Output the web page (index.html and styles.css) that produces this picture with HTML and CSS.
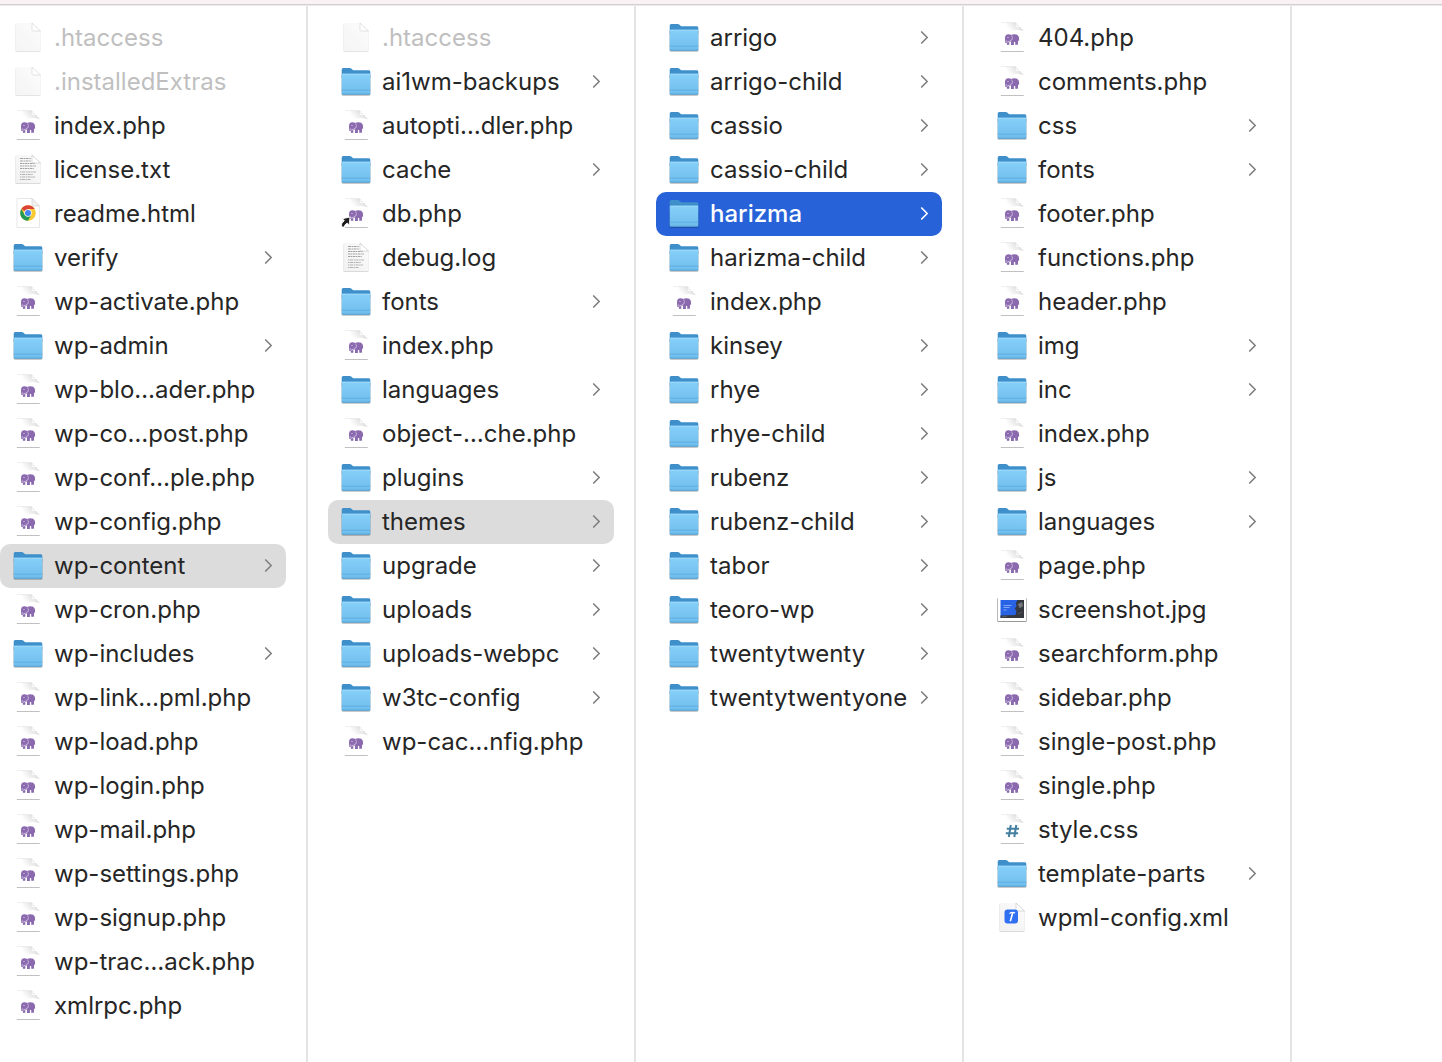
FILE: index.html
```html
<!DOCTYPE html>
<html lang="en">
<head>
    <meta charset="UTF-8">
    <meta name="viewport" content="width=device-width, initial-scale=1.0">
    <title>themes</title>
    <link rel="stylesheet" href="styles.css">
</head>
<body>
    <svg class="sprite" aria-hidden="true">
        <defs>
            <linearGradient id="folderFront" x1="0" y1="0" x2="0" y2="1">
                <stop offset="0" stop-color="#86cffa"/>
                <stop offset="1" stop-color="#6fbdec"/>
            </linearGradient>
            <linearGradient id="paper" x1="0" y1="1" x2="1" y2="0">
                <stop offset="0" stop-color="#f1f1f1"/>
                <stop offset="1" stop-color="#fbfbfb"/>
            </linearGradient>
            <linearGradient id="foldShade" gradientUnits="userSpaceOnUse" x1="15" y1="10" x2="23" y2="3">
                <stop offset="0" stop-color="#ffffff"/>
                <stop offset="1" stop-color="#dedede"/>
            </linearGradient>
        </defs>
        <symbol id="folder" viewBox="0 0 32 32">
            <path d="M1.500 9h29v19a1.500 1.500 0 0 1-1.500 1.700h-26a1.500 1.500 0 0 1-1.500-1.700z" fill="#000" opacity=".28"/>
            <path d="M1.700 12V3.500q0-1.500 1.500-1.500h6.500q1 0 1.700.8l1.200 1q.6.500 1.500.5H29q1.300 0 1.300 1.500V12z" fill="#3f8fcb"/>
            <path d="M1.700 8.800q0-1.100 1.100-1.100h26.400q1.100 0 1.100 1.100v18.600q0 1.300-1.300 1.300H3q-1.300 0-1.300-1.300z" fill="url(#folderFront)"/>
            <path d="M2.300 8.200H30" stroke="#a4defd" stroke-width=".8"/>
            <path d="M1.700 24.200h28.600" stroke="#5aa9db" stroke-width=".8"/>
            <path d="M2 28.200h28" stroke="#4e9bcb" stroke-width=".8"/>
        </symbol>
        <symbol id="page" viewBox="0 0 32 32">
            <path d="M5 1.500h15.500l8 7.500v19.500q0 1.500-1.500 1.500H5q-1.500 0-1.500-1.500V3q0-1.500 1.500-1.500z" fill="#000" opacity=".18"/>
            <path d="M5 1h15l8.500 8v19q0 1.300-1.300 1.300H5q-1.300 0-1.300-1.300V2.300Q3.700 1 5 1z" fill="url(#paper)"/>
            <path d="M20 1v6.800q0 1.200 1.200 1.200H28.500z" fill="#fff" stroke="#c8c8c8" stroke-width=".7"/>
        </symbol>
        <symbol id="sheet" viewBox="0 0 32 32">
            <path d="M5 0h14.500l7.500 9v20H5z" fill="#fff"/>
            <path d="M5 .3H18.500Q20.500 1 20.500 5q4.500-.2 6 4.200Q22 6.500 17.500 8.500L12 10 10 1z" fill="url(#foldShade)"/>
            <path d="M19 .5L27.500 9" stroke="#c2c2c2" stroke-width=".7" stroke-dasharray="2 1.200"/>
            <path d="M5 .4h13" stroke="#e6e6e6" stroke-width=".7"/>
            <path d="M4.800 29.500h23" stroke="#b9b9b9" stroke-width=".9"/>
        </symbol>
        <symbol id="php" viewBox="0 0 32 32">
            <use href="#sheet"/>
            <path d="M9 16.500Q8.800 12.300 12.500 12.200q1.700 0 2.700.7 1-.6 3.300-.6 3.300 0 4.200 2.200.5 1.300.4 4.300l-.7.200-.3-1.500-.2 5.200h-2.700v-2.600h-1.300v2.800h-2.900v-3.500q-1 .3-1.700-.1v3.500h-2.400v-2.200q-.6 1.200-1.600 0Q9.100 19 9 16.500z" fill="#8a69af"/>
            <path d="M15.600 13.500q1.600 2.300.3 4.400-1 1-2.300.3" fill="none" stroke="#e8ddf2" stroke-width=".6"/>
            <circle cx="12" cy="15.500" r=".5" fill="#fff"/>
            <path d="M10.500 18.500l.8 2M12.500 19l-.4 1.500" stroke="#fff" stroke-width=".6"/>
        </symbol>
        <symbol id="alias" viewBox="0 0 32 32">
            <use href="#php"/>
            <path d="M1.300 28.500Q1 25 4.300 22.600L2.400 20.700 10 19l-.8 8-2-1.900Q4.500 26.500 4 29.300z" fill="#1c1c1c" stroke="#fff" stroke-width=".9"/>
        </symbol>
        <symbol id="text" viewBox="0 0 32 32">
            <use href="#page"/>
            <g fill="none" stroke="#a3a3a3" stroke-width="1.100">
                <path d="M8 4.500h11M8 7h11" stroke-dasharray="3 .6 1.500 .5"/>
                <path d="M8 9.500h15M8 12h16M8 14.500h14" stroke-dasharray="2.500 .5 1.200 .6"/>
                <path d="M8 18h16M8 20.500h13M8 23h15M8 25.500h11" stroke-dasharray="1.500 .5 3 .6" stroke="#b2b2b2"/>
            </g>
        </symbol>
        <symbol id="chrome" viewBox="0 0 32 32">
            <path d="M5 .5h15l7.500 8v21H5z" fill="#fff" stroke="#dedede" stroke-width=".7"/>
            <path d="M20 .5V8h7.500z" fill="#f2f2f2" stroke="#cbcbcb" stroke-width=".6"/>
            <circle cx="16" cy="15" r="7.800" fill="#fbc934"/>
            <path d="M16 15L9.250 11.100A7.800 7.800 0 0 1 22.750 11.100H16z" fill="#dc4437"/>
            <path d="M9.250 11.100A7.800 7.800 0 0 0 16 22.800L19.200 16.900 12.700 16.900z" fill="#239957"/>
            <circle cx="16" cy="15" r="3.700" fill="#fff"/>
            <circle cx="16" cy="15" r="3" fill="#4285f4"/>
        </symbol>
        <symbol id="css" viewBox="0 0 32 32">
            <use href="#sheet"/>
            <path d="M14.800 11l-2 12M20.300 11l-2 12M10.800 14.700H23M9.800 19.200h12.300" fill="none" stroke="#437f9f" stroke-width="2"/>
        </symbol>
        <symbol id="xml" viewBox="0 0 32 32">
            <use href="#page"/>
            <rect x="8.500" y="7.500" width="13.500" height="14" rx="3" fill="#2f6ff2"/>
            <path d="M16.800 10.500l-2.500 8.700" stroke="#fff" stroke-width="1.600"/>
            <path d="M13.500 11.700q1.300-1.500 4.500-1.200l1 .8" fill="none" stroke="#fff" stroke-width="1.200"/>
        </symbol>
        <symbol id="image" viewBox="0 0 32 32">
            <rect x="1.300" y="4" width="29.400" height="24" rx="1" fill="#000" opacity=".4"/>
            <rect x="2" y="4" width="28" height="23" fill="#fff"/>
            <rect x="4.500" y="6" width="23.500" height="18" fill="#2863e6"/>
            <path d="M21.500 6H28v18H4.500v-2.500l15-.5 1-4-1.800-2.500 2-2.500-1-2.500z" fill="#35383e"/>
            <path d="M22 10l4-1.500.8 3.500-3 2zM6 23l5-.8M22 20l4-2" fill="#77797d" stroke="#6c7075" stroke-width=".6"/>
            <path d="M7.500 11.500h8M7.500 13.500h6M7.500 16h3" stroke="#a8c3ff" stroke-width=".7"/>
        </symbol>
        <symbol id="chevron" viewBox="0 0 10 16">
            <path d="M1.700 2L7.200 7.500 1.700 13" fill="none" stroke="currentColor" stroke-width="1.700" stroke-linecap="round" stroke-linejoin="round"/>
        </symbol>
    </svg>

    <header class="toolbar"></header>
    <main class="browser">
        <ul class="column first">
            <li><a class="item hidden-file" href="#"><svg class="icon"><use href="#page"/></svg><span class="name">.htaccess</span></a></li>
            <li><a class="item hidden-file" href="#"><svg class="icon"><use href="#page"/></svg><span class="name">.installedExtras</span></a></li>
            <li><a class="item" href="#"><svg class="icon"><use href="#php"/></svg><span class="name">index.php</span></a></li>
            <li><a class="item" href="#"><svg class="icon"><use href="#text"/></svg><span class="name">license.txt</span></a></li>
            <li><a class="item" href="#"><svg class="icon"><use href="#chrome"/></svg><span class="name">readme.html</span></a></li>
            <li><a class="item" href="#"><svg class="icon"><use href="#folder"/></svg><span class="name">verify</span><svg class="arrow"><use href="#chevron"/></svg></a></li>
            <li><a class="item" href="#"><svg class="icon"><use href="#php"/></svg><span class="name">wp-activate.php</span></a></li>
            <li><a class="item" href="#"><svg class="icon"><use href="#folder"/></svg><span class="name">wp-admin</span><svg class="arrow"><use href="#chevron"/></svg></a></li>
            <li><a class="item" href="#"><svg class="icon"><use href="#php"/></svg><span class="name">wp-blo…ader.php</span></a></li>
            <li><a class="item" href="#"><svg class="icon"><use href="#php"/></svg><span class="name">wp-co…post.php</span></a></li>
            <li><a class="item" href="#"><svg class="icon"><use href="#php"/></svg><span class="name">wp-conf…ple.php</span></a></li>
            <li><a class="item" href="#"><svg class="icon"><use href="#php"/></svg><span class="name">wp-config.php</span></a></li>
            <li><a class="item open" href="#"><svg class="icon"><use href="#folder"/></svg><span class="name">wp-content</span><svg class="arrow"><use href="#chevron"/></svg></a></li>
            <li><a class="item" href="#"><svg class="icon"><use href="#php"/></svg><span class="name">wp-cron.php</span></a></li>
            <li><a class="item" href="#"><svg class="icon"><use href="#folder"/></svg><span class="name">wp-includes</span><svg class="arrow"><use href="#chevron"/></svg></a></li>
            <li><a class="item" href="#"><svg class="icon"><use href="#php"/></svg><span class="name">wp-link…pml.php</span></a></li>
            <li><a class="item" href="#"><svg class="icon"><use href="#php"/></svg><span class="name">wp-load.php</span></a></li>
            <li><a class="item" href="#"><svg class="icon"><use href="#php"/></svg><span class="name">wp-login.php</span></a></li>
            <li><a class="item" href="#"><svg class="icon"><use href="#php"/></svg><span class="name">wp-mail.php</span></a></li>
            <li><a class="item" href="#"><svg class="icon"><use href="#php"/></svg><span class="name">wp-settings.php</span></a></li>
            <li><a class="item" href="#"><svg class="icon"><use href="#php"/></svg><span class="name">wp-signup.php</span></a></li>
            <li><a class="item" href="#"><svg class="icon"><use href="#php"/></svg><span class="name">wp-trac…ack.php</span></a></li>
            <li><a class="item" href="#"><svg class="icon"><use href="#php"/></svg><span class="name">xmlrpc.php</span></a></li>
        </ul>
        <ul class="column">
            <li><a class="item hidden-file" href="#"><svg class="icon"><use href="#page"/></svg><span class="name">.htaccess</span></a></li>
            <li><a class="item" href="#"><svg class="icon"><use href="#folder"/></svg><span class="name">ai1wm-backups</span><svg class="arrow"><use href="#chevron"/></svg></a></li>
            <li><a class="item" href="#"><svg class="icon"><use href="#php"/></svg><span class="name">autopti…dler.php</span></a></li>
            <li><a class="item" href="#"><svg class="icon"><use href="#folder"/></svg><span class="name">cache</span><svg class="arrow"><use href="#chevron"/></svg></a></li>
            <li><a class="item" href="#"><svg class="icon"><use href="#alias"/></svg><span class="name">db.php</span></a></li>
            <li><a class="item" href="#"><svg class="icon"><use href="#text"/></svg><span class="name">debug.log</span></a></li>
            <li><a class="item" href="#"><svg class="icon"><use href="#folder"/></svg><span class="name">fonts</span><svg class="arrow"><use href="#chevron"/></svg></a></li>
            <li><a class="item" href="#"><svg class="icon"><use href="#php"/></svg><span class="name">index.php</span></a></li>
            <li><a class="item" href="#"><svg class="icon"><use href="#folder"/></svg><span class="name">languages</span><svg class="arrow"><use href="#chevron"/></svg></a></li>
            <li><a class="item" href="#"><svg class="icon"><use href="#php"/></svg><span class="name">object-…che.php</span></a></li>
            <li><a class="item" href="#"><svg class="icon"><use href="#folder"/></svg><span class="name">plugins</span><svg class="arrow"><use href="#chevron"/></svg></a></li>
            <li><a class="item open" href="#"><svg class="icon"><use href="#folder"/></svg><span class="name">themes</span><svg class="arrow"><use href="#chevron"/></svg></a></li>
            <li><a class="item" href="#"><svg class="icon"><use href="#folder"/></svg><span class="name">upgrade</span><svg class="arrow"><use href="#chevron"/></svg></a></li>
            <li><a class="item" href="#"><svg class="icon"><use href="#folder"/></svg><span class="name">uploads</span><svg class="arrow"><use href="#chevron"/></svg></a></li>
            <li><a class="item" href="#"><svg class="icon"><use href="#folder"/></svg><span class="name">uploads-webpc</span><svg class="arrow"><use href="#chevron"/></svg></a></li>
            <li><a class="item" href="#"><svg class="icon"><use href="#folder"/></svg><span class="name">w3tc-config</span><svg class="arrow"><use href="#chevron"/></svg></a></li>
            <li><a class="item" href="#"><svg class="icon"><use href="#php"/></svg><span class="name">wp-cac…nfig.php</span></a></li>
        </ul>
        <ul class="column">
            <li><a class="item" href="#"><svg class="icon"><use href="#folder"/></svg><span class="name">arrigo</span><svg class="arrow"><use href="#chevron"/></svg></a></li>
            <li><a class="item" href="#"><svg class="icon"><use href="#folder"/></svg><span class="name">arrigo-child</span><svg class="arrow"><use href="#chevron"/></svg></a></li>
            <li><a class="item" href="#"><svg class="icon"><use href="#folder"/></svg><span class="name">cassio</span><svg class="arrow"><use href="#chevron"/></svg></a></li>
            <li><a class="item" href="#"><svg class="icon"><use href="#folder"/></svg><span class="name">cassio-child</span><svg class="arrow"><use href="#chevron"/></svg></a></li>
            <li><a class="item selected" href="#"><svg class="icon"><use href="#folder"/></svg><span class="name">harizma</span><svg class="arrow"><use href="#chevron"/></svg></a></li>
            <li><a class="item" href="#"><svg class="icon"><use href="#folder"/></svg><span class="name">harizma-child</span><svg class="arrow"><use href="#chevron"/></svg></a></li>
            <li><a class="item" href="#"><svg class="icon"><use href="#php"/></svg><span class="name">index.php</span></a></li>
            <li><a class="item" href="#"><svg class="icon"><use href="#folder"/></svg><span class="name">kinsey</span><svg class="arrow"><use href="#chevron"/></svg></a></li>
            <li><a class="item" href="#"><svg class="icon"><use href="#folder"/></svg><span class="name">rhye</span><svg class="arrow"><use href="#chevron"/></svg></a></li>
            <li><a class="item" href="#"><svg class="icon"><use href="#folder"/></svg><span class="name">rhye-child</span><svg class="arrow"><use href="#chevron"/></svg></a></li>
            <li><a class="item" href="#"><svg class="icon"><use href="#folder"/></svg><span class="name">rubenz</span><svg class="arrow"><use href="#chevron"/></svg></a></li>
            <li><a class="item" href="#"><svg class="icon"><use href="#folder"/></svg><span class="name">rubenz-child</span><svg class="arrow"><use href="#chevron"/></svg></a></li>
            <li><a class="item" href="#"><svg class="icon"><use href="#folder"/></svg><span class="name">tabor</span><svg class="arrow"><use href="#chevron"/></svg></a></li>
            <li><a class="item" href="#"><svg class="icon"><use href="#folder"/></svg><span class="name">teoro-wp</span><svg class="arrow"><use href="#chevron"/></svg></a></li>
            <li><a class="item" href="#"><svg class="icon"><use href="#folder"/></svg><span class="name">twentytwenty</span><svg class="arrow"><use href="#chevron"/></svg></a></li>
            <li><a class="item" href="#"><svg class="icon"><use href="#folder"/></svg><span class="name">twentytwentyone</span><svg class="arrow"><use href="#chevron"/></svg></a></li>
        </ul>
        <ul class="column">
            <li><a class="item" href="#"><svg class="icon"><use href="#php"/></svg><span class="name">404.php</span></a></li>
            <li><a class="item" href="#"><svg class="icon"><use href="#php"/></svg><span class="name">comments.php</span></a></li>
            <li><a class="item" href="#"><svg class="icon"><use href="#folder"/></svg><span class="name">css</span><svg class="arrow"><use href="#chevron"/></svg></a></li>
            <li><a class="item" href="#"><svg class="icon"><use href="#folder"/></svg><span class="name">fonts</span><svg class="arrow"><use href="#chevron"/></svg></a></li>
            <li><a class="item" href="#"><svg class="icon"><use href="#php"/></svg><span class="name">footer.php</span></a></li>
            <li><a class="item" href="#"><svg class="icon"><use href="#php"/></svg><span class="name">functions.php</span></a></li>
            <li><a class="item" href="#"><svg class="icon"><use href="#php"/></svg><span class="name">header.php</span></a></li>
            <li><a class="item" href="#"><svg class="icon"><use href="#folder"/></svg><span class="name">img</span><svg class="arrow"><use href="#chevron"/></svg></a></li>
            <li><a class="item" href="#"><svg class="icon"><use href="#folder"/></svg><span class="name">inc</span><svg class="arrow"><use href="#chevron"/></svg></a></li>
            <li><a class="item" href="#"><svg class="icon"><use href="#php"/></svg><span class="name">index.php</span></a></li>
            <li><a class="item" href="#"><svg class="icon"><use href="#folder"/></svg><span class="name">js</span><svg class="arrow"><use href="#chevron"/></svg></a></li>
            <li><a class="item" href="#"><svg class="icon"><use href="#folder"/></svg><span class="name">languages</span><svg class="arrow"><use href="#chevron"/></svg></a></li>
            <li><a class="item" href="#"><svg class="icon"><use href="#php"/></svg><span class="name">page.php</span></a></li>
            <li><a class="item" href="#"><svg class="icon"><use href="#image"/></svg><span class="name">screenshot.jpg</span></a></li>
            <li><a class="item" href="#"><svg class="icon"><use href="#php"/></svg><span class="name">searchform.php</span></a></li>
            <li><a class="item" href="#"><svg class="icon"><use href="#php"/></svg><span class="name">sidebar.php</span></a></li>
            <li><a class="item" href="#"><svg class="icon"><use href="#php"/></svg><span class="name">single-post.php</span></a></li>
            <li><a class="item" href="#"><svg class="icon"><use href="#php"/></svg><span class="name">single.php</span></a></li>
            <li><a class="item" href="#"><svg class="icon"><use href="#css"/></svg><span class="name">style.css</span></a></li>
            <li><a class="item" href="#"><svg class="icon"><use href="#folder"/></svg><span class="name">template-parts</span><svg class="arrow"><use href="#chevron"/></svg></a></li>
            <li><a class="item" href="#"><svg class="icon"><use href="#xml"/></svg><span class="name">wpml-config.xml</span></a></li>
        </ul>
    </main>
</body>
</html>
```

FILE: styles.css
```css
* {
    box-sizing: border-box;
}
body {
    margin: 0;
    min-height: 100vh;
    display: flex;
    flex-direction: column;
    background-color: #fff;
    color: #262626;
    font-family: Inter, "Liberation Sans", sans-serif;
    font-size: 24px;
    line-height: 44px;
}
.sprite {
    position: absolute;
    width: 0;
    height: 0;
}
.toolbar {
    height: 5px;
    background-color: #f9f1f3;
    border-bottom: 1px solid #d2cfd0;
}
.browser {
    flex: 1;
    display: flex;
    border-top: 1px solid #ebebeb;
}
.column {
    flex: 0 0 328px;
    margin: 0;
    padding: 10px 20px;
    border-right: 2px solid #e4e4e4;
    list-style: none;
}
/* the leftmost column is scrolled against the window edge */
.column.first {
    flex-basis: 308px;
    padding-left: 0;
}
.item {
    display: flex;
    align-items: center;
    height: 44px;
    padding: 0 12px;
    border-radius: 10px;
    color: inherit;
    text-decoration: none;
    white-space: nowrap;
}
.icon {
    flex: none;
    width: 32px;
    height: 32px;
    margin-right: 10px;
}
.name {
    flex: 1;
    min-width: 0;
}
.arrow {
    flex: none;
    width: 10px;
    height: 16px;
    color: #808080;
}
.hidden-file .name {
    color: #bfbfbf;
}
.hidden-file .icon {
    opacity: 0.7;
}
.open {
    background-color: #dcdcdc;
}
.selected {
    background-color: #2762d9;
    color: #fff;
}
.selected .name {
    font-weight: 500;
}
.selected .arrow {
    color: #fff;
}
```
